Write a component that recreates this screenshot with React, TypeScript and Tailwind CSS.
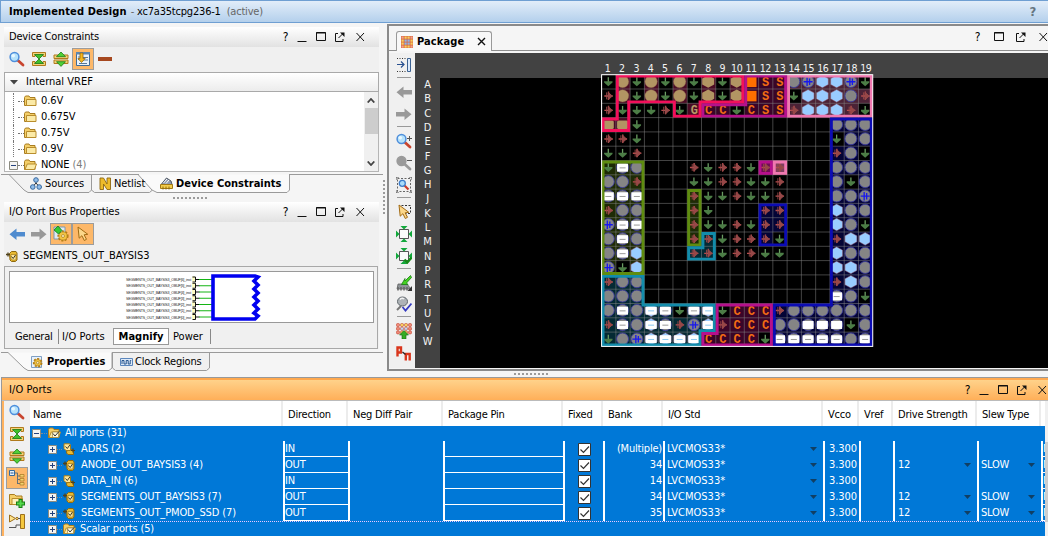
import React from "react";

type Kids = { children?: React.ReactNode };

/* ---------- icons ---------- */

const Svg = ({ children, w = 16, h = 16 }: Kids & { w?: number; h?: number }) => (
  <svg width={w} height={h} viewBox={`0 0 ${w} ${h}`} fill="none" className="block shrink-0">
    {children}
  </svg>
);

const Mag = ({ grey = false, sign }: { grey?: boolean; sign?: "+" | "-" }) => (
  <Svg>
    <path d="M8.5 9 L14 14" stroke={grey ? "#9a9a9a" : "#c8452f"} strokeWidth="2.8" strokeLinecap="round" />
    <circle cx="5.5" cy="6" r="4.4" fill={grey ? "#9a9a9a" : "#b5e2fb"} stroke={grey ? "#9a9a9a" : "#4e8edb"} strokeWidth="1.5" />
    {!grey && <circle cx="4.3" cy="4.8" r="1.8" fill="#e8f7ff" />}
    {sign && <path d={sign === "+" ? "M11 5.5h5M13.5 3v5" : "M11 5.5h5"} stroke="#555" />}
  </Svg>
);

const bars = "M1.5 1.5h13v4h-2.500v-1.500h-8v1.500h-2.500zM1.500 14.500h13v-4h-2.500v1.500h-8v-1.500h-2.500z";
const CollapseAll = () => (
  <Svg>
    <path d={bars} fill="#f3d27a" stroke="#b07a1c" />
    <path d="M3.500 3.500h9L8 8zM3.500 12.500h9L8 8z" fill="#3fbf2c" stroke="#1c7c15" strokeWidth=".8" />
  </Svg>
);
const ExpandAll = () => (
  <Svg>
    <path d="M1 7.500v-3.500h14v3.500zM1 9h14v3.500h-14z" fill="#f3d27a" stroke="#b07a1c" />
    <path d="M3.500 5.700L8 1l4.500 4.700zM3.500 10.700L8 15.400l4.500-4.700z" fill="#4fd038" stroke="#1c7c15" strokeWidth=".8" />
  </Svg>
);
const DocArrow = () => (
  <Svg>
    <path d="M1.500 1.500h13v13h-13z" fill="#e9f2fc" stroke="#3f6b98" />
    <path d="M1 1h14v2.500H1z" fill="#5c86b0" />
    <path d="M3 6h3M3 8.500h2M8 6.500h5M8 9h5M4 12.500h8" stroke="#587796" />
    <path d="M5 2h3v5.500h2.200L6.500 11.500 3 7.500h2z" fill="#f5b81e" stroke="#98680a" strokeWidth=".8" />
  </Svg>
);
const Folder = ({ open = false, check = false }: { open?: boolean; check?: boolean }) => (
  <Svg w={13} h={12}>
    <path d="M.5 10.500v-8l1-1.500h3.500l1 1.500h5v8z" fill="#f4cf69" stroke="#a97d21" />
    <path d={open ? "M1 10.500l2.300-5.500h9.200L10.500 10.500z" : "M2.500 10.500v-6h9.500v6z"} fill="#fbeaa7" stroke="#b98d2c" />
    {check && (
      <>
        <path d="M4.500 5h6v5.500h-6z" fill="#fff9dd" stroke="#8a7330" strokeWidth=".6" />
        <path d="M5 6.500l2 2.500L11 4.500" stroke="#333" />
      </>
    )}
  </Svg>
);
const Expander = ({ open = false }: { open?: boolean }) => (
  <Svg w={9} h={9}>
    <path d="M.5.5h8v8h-8z" fill="#f4f4f2" stroke="#8b8b80" />
    <path d={open ? "M2 4.500h5" : "M2 4.500h5M4.500 2v5"} stroke="#24427c" />
  </Svg>
);
const Arrow = ({ color, right = false }: { color: string; right?: boolean }) => (
  <Svg>
    <path d={right ? "M0 6v4.500h8.500v3.500L15.500 8.200 8.500 2.500v3.500z" : "M16 6v4.500H7.500v3.500L.5 8.200 7.500 2.500v3.500z"} fill={color} />
  </Svg>
);
const Gear = ({ cx = 8, cy = 8, r = 4 }: { cx?: number; cy?: number; r?: number }) => (
  <>
    <circle cx={cx} cy={cy} r={r} stroke="#b37d13" strokeWidth="2.400" strokeDasharray="1.900 1.300" />
    <circle cx={cx} cy={cy} r={r - 0.3} fill="#f2c544" stroke="#b98720" strokeWidth=".8" />
    <circle cx={cx} cy={cy} r={r / 3} fill="#fff5d0" stroke="#a87914" strokeWidth=".7" />
  </>
);
const GearDoc = () => (
  <Svg>
    <path d="M1 1h11v12h-11z" fill="#dfeaf5" stroke="#7f97b0" />
    <Gear cx={10} cy={10} r={4.4} />
    <path d="M1 4l4-4 4 4.500-3.500 3.500z" fill="#35c935" stroke="#16761a" strokeWidth=".8" />
  </Svg>
);
const Properties = () => (
  <Svg w={12} h={12}>
    <path d="M.5.5h10v11h-10z" fill="#e8f1fb" stroke="#7f9fc4" />
    <Gear cx={6.7} cy={6.7} r={3.6} />
  </Svg>
);
const cursorPath = "M3 1l1.200 11.200 2.700-2.500 2.400 4.800 2.200-1.200-2.400-4.500 3.700-.5z";
const Cursor = ({ marquee = false }: { marquee?: boolean }) => (
  <Svg>
    {marquee && <path d="M5.500 1.500h9v8h-5" stroke="#333" strokeDasharray="2 1.500" />}
    <path d={cursorPath} fill="#fbd78a" stroke="#a26a12" />
  </Svg>
);
const Port = ({ out = false }: { out?: boolean }) => (
  <Svg w={12} h={12}>
    {out ? (
      <>
        <path d="M3.500 3.500l2-2h4.500l1 1.500v7l-1.500 1.500h-4l-1.500-1.500z" fill="#e8b932" stroke="#8f6a10" />
        <path d="M5 4.500h5v5.500h-4l-1-1.500z" fill="#ffe79a" stroke="#a67b14" strokeWidth=".7" />
        <path d="M5.500 6.500l1.700 2L9.500 5" stroke="#3a3a30" />
        <path d="M0 4.500h4M2 2.500v4" stroke="#51431d" strokeWidth="1.300" />
      </>
    ) : (
      <>
        <path d="M4 6.500h5.500l1 1v4h-5.500l-1.500-1.500z" fill="#e8b932" stroke="#8f6a10" />
        <path d="M1 .8h5.500l1 1.200v5.500h-4.500l-2-2z" fill="#ffe79a" stroke="#a67b14" />
        <path d="M2.500 3.500l1.800 2L6.800 2" stroke="#3a3a30" />
        <path d="M8 7.500h4M10 5.500v4" stroke="#51431d" strokeWidth="1.200" />
      </>
    )}
  </Svg>
);
const Sources = () => (
  <Svg w={12} h={13}>
    <path d="M6 3v3L2.500 10M6 6l3.500 4" stroke="#333" />
    <circle cx="6" cy="3" r="2.300" fill="#91bde9" stroke="#35679e" />
    <circle cx="2.800" cy="10" r="2.300" fill="#91bde9" stroke="#35679e" />
    <circle cx="9.200" cy="10" r="2.300" fill="#91bde9" stroke="#35679e" />
  </Svg>
);
const Netlist = () => (
  <Svg w={12} h={13}>
    <path d="M1 12.500V1h3.500l3.500 6V1h3.500v11.500H8L4.500 7v5.500z" fill="#edbb2b" stroke="#8d6811" strokeWidth=".9" />
  </Svg>
);
const Constraint = () => (
  <Svg w={13} h={13}>
    <path d="M1.500 7l5-6 4.500 3 1 3.500H1.500z" fill="#8f9bb0" stroke="#4f5864" />
    <path d="M3.500 6l3.500-4M6 6.500l3-3.500" stroke="#fff" />
    <path d="M.5 7.500h12v4H.5z" fill="#f3cd4d" stroke="#a37915" />
    <path d="M3 9.500v3M6 9.500v3M9 9.500v3" stroke="#8b690f" />
  </Svg>
);
const Clock = () => (
  <Svg w={13} h={10}>
    <path d="M.5 1.500h12v7H.5z" fill="#dfebf9" stroke="#5b86bc" />
    <path d="M2 7V3.500h2V7h2.200V3.500h2V7h2V3.500h1" stroke="#27548d" />
  </Svg>
);
const PackageIcon = () => (
  <Svg w={12} h={12}>
    <path d="M0 0h12v12H0z" fill="#d9683f" />
    {[0, 1, 2, 3].map((r) =>
      [0, 1, 2, 3].map((c) => (
        <rect key={`${r}${c}`} x={0.5 + c * 3} y={0.5 + r * 3} width="2.200" height="2.200" fill={r === 1 || r === 2 ? (c === 1 || c === 2 ? "#8db5ea" : "#f7cf5e") : c === 1 || c === 2 ? "#f7cf5e" : "#f3a28c"} />
      )),
    )}
  </Svg>
);
const AutoHide = () => (
  <Svg>
    <path d="M1 1.500h9M1 14.500h9" stroke="#333" strokeDasharray="1 1.500" />
    <path d="M1 7.500h7M5 4.500l3 3-3 3" stroke="#285090" strokeWidth="1.200" />
    <path d="M11.500 1.500h3v13h-3z" fill="#dceafb" stroke="#3c6293" />
  </Svg>
);
const ZoomFit = () => (
  <Svg>
    <path d="M1.500 1.500h13v13h-13z" stroke="#666" strokeDasharray="2 1.500" />
    <path d="M0 3V0h3M13 0h3v3M16 13v3h-3M3 16H0v-3" stroke="#555" />
    <path d="M8 8l4.500 4.500" stroke="#cc3b2b" strokeWidth="2.200" />
    <circle cx="6.300" cy="6.300" r="3" fill="#aadcfb" stroke="#3d7dca" strokeWidth="1.300" />
  </Svg>
);
const FitSel = ({ check = false }: { check?: boolean }) => (
  <Svg>
    <path d="M3.500 3.500h9v9h-9z" fill="#fafafa" stroke="#555" />
    <path d="M4.500 0h7L8 3.500zM4.500 16h7L8 12.500zM0 4.500v7L3.500 8zM16 4.500v7L12.500 8z" fill="#12a83c" />
    {check && <path d="M8.500 11.500l2.700 3 4.300-5" stroke="#168a19" strokeWidth="2.500" />}
  </Svg>
);
const ChipArrow = () => (
  <Svg>
    <path d="M2 9h9l4 5H1z" fill="#8f9498" stroke="#555" strokeWidth=".7" />
    <path d="M2 12v3.500M5 12v3.500M8 12v3.500M11 12v3.500" stroke="#666" strokeWidth="1.500" />
    <path d="M16 11v5h-4.500z" fill="#333" />
    <path d="M14.500.5L9 6V3.500L5.500 9.500H12L10.500 8l5-5.500z" fill="#46d321" stroke="#167d12" strokeWidth=".8" />
  </Svg>
);
const PinCheck = () => (
  <Svg>
    <path d="M1 14l4-4" stroke="#777" strokeWidth="2" />
    <ellipse cx="6.500" cy="5.500" rx="5" ry="4.500" fill="#aeb3b7" stroke="#60666b" />
    <path d="M4 3.500c1-1.500 3-1.500 4-.5" stroke="#f2f2f2" strokeWidth="1.500" />
    <path d="M6.500 11l3 3.500L15.500 7.500" stroke="#353bc1" strokeWidth="1.800" />
  </Svg>
);
const GridUp = () => (
  <Svg>
    {[0, 1, 2].map((r) =>
      [0, 1, 2, 3].map((c) => (
        <rect key={`${r}${c}`} x={0.5 + c * 4} y={0.5 + r * 3.7} width="3" height="3" rx="1" fill={r === 1 && (c === 1 || c === 2) ? "#bcd5f4" : c === 1 || c === 2 ? "#f7cf5e" : "#f08a78"} stroke="#c2432f" strokeWidth=".6" />
      )),
    )}
    <path d="M8 7.500l4.500 4.500H10v4H6v-4H3.500z" fill="#34ab25" stroke="#166b12" strokeWidth=".6" />
  </Svg>
);
const DiffPair = () => (
  <Svg>
    <path d="M1.500 11.500V2.500h3.500v5h-3M9.800 15.500V9h3.900v6.500" stroke="#d9351b" strokeWidth="2.400" />
    <path d="M6.500 7l3 2.500" stroke="#222" strokeWidth="1.300" />
  </Svg>
);
const TreeIcon = () => (
  <Svg>
    <path d="M.5.5h5v5h-5z" fill="#e6f1fb" stroke="#356a9e" />
    <path d="M1.500 3h3" stroke="#24518a" />
    <path d="M6 3h2.500v11M8.500 6H11M8.500 9.500H11M8.500 13.500H11" stroke="#65727b" />
    <path d="M11 4.500h4v2.500h-4zM11 8.500h4V11h-4zM11 12.500h4V15h-4z" fill="#f5d170" stroke="#a37523" strokeWidth=".7" />
  </Svg>
);
const AddFolder = () => (
  <Svg>
    <path d="M.5 11.500V1.500h5L7 3h6v8.500z" fill="#f4cf69" stroke="#a97d21" />
    <path d="M3 11.500v-6h10.500v6z" fill="#fff1bd" stroke="#b98d2c" />
    <path d="M11.500 6v9M7 10.500h9" stroke="#187d17" strokeWidth="4" />
    <path d="M11.500 7v7M8 10.500h7" stroke="#54d84b" strokeWidth="2" />
  </Svg>
);
const BufferIcon = () => (
  <Svg>
    <path d="M.5 1v7l6-3.500z" fill="#ffe38b" stroke="#9c701d" />
    <circle cx="8" cy="4.500" r="1.200" fill="#ffe38b" stroke="#9c701d" />
    <path d="M9 4.500h3M0 13.500h7V11h4" stroke="#555" />
    <path d="M11.500 .5h4v14h-4z" fill="#f4c73e" stroke="#9c701d" />
  </Svg>
);

/* ---------- window controls ---------- */

const Controls = ({ wide = false }: { wide?: boolean }) => (
  <div className="flex items-center">
    <span className="w-[9px] text-center text-[12px] leading-none">?</span>
    {!wide && <div className="ml-[7px]"><Svg w={10} h={10}><path d="M.5 9.500h9" stroke="#111" /></Svg></div>}
    <div className={wide ? "ml-[11px]" : "ml-[8px]"}>
      <Svg w={12} h={10}><path d="M1.500 .5h9v8h-9z" stroke="#111" /><path d="M1 1h10" stroke="#111" /></Svg>
    </div>
    <div className={wide ? "ml-[11px]" : "ml-[8px]"}>
      <Svg w={10} h={10}>
        <path d="M3 1.500H.5v8h7.500V7M3.500 6L8 1.500" stroke="#111" />
        <path d="M5 .5h4.500V5z" fill="#111" />
      </Svg>
    </div>
    <div className={wide ? "ml-[12px]" : "ml-[10px]"}>
      <Svg w={11} h={10}><path d="M1.500 1l7.500 8M9 1L1.500 9" stroke="#111" /></Svg>
    </div>
  </div>
);

const Dots = ({ vertical = false }: { vertical?: boolean }) => (
  <div className={vertical ? "flex flex-col gap-[2px]" : "flex gap-[2px]"}>
    {Array.from({ length: 9 }, (_, i) => (
      <i key={i} className="block size-[2px] bg-[#9b9b9b]" />
    ))}
  </div>
);

const Hot = ({ children }: Kids) => (
  <div className="flex size-[22px] items-center justify-center border border-[#9c9c9c] bg-[#fdb869]">{children}</div>
);

const PanelTitle = ({ children }: Kids) => (
  <div className="flex h-[20px] w-[375px] items-center justify-between bg-linear-to-b from-white to-[#e2e2e2] pr-[13px] pl-[5px]">
    <span>{children}</span>
    <Controls />
  </div>
);

/* ---------- package drawing ---------- */

const PX = 14.27;
const PY = 14.3;
const cells = [
  "gtgtgtghghOSScbxxbg",
  "vtgtgtghghOSSgxxxcv",
  "vgggvgGCCgCSSvxxxvg",
  "rrg.............ccc",
  "vvg.............gcc",
  "ggv.............vcg",
  "gwc...vgvvgvv...ccc",
  "ccv...ggvvggv...cgc",
  "www...vggvggv...ccb",
  "vcc...vg...vv...xcc",
  "bww...vggvgvv...xcg",
  "cwc...vvgvvvg...vxx",
  "cwx...vvgvvgg...xcc",
  "bgx.............xxc",
  "vcc.............vxc",
  "ccc.............wcg",
  "cwcWwgwWgCCCvcccccc",
  "vwcWwvbWvCCCccpppgc",
  "gcbWWWWCCCCgwwwwwcw",
];

type Region = { c: string; f: string; p: number[][] };
const box = (a: number, b: number, c: number, d: number) => [[a, b], [c, b], [c, d], [a, d]];
const regions: Region[] = [
  { c: "#b6108c", f: "#3a0528", p: [[10, 0], [13, 0], [13, 3], [7, 3], [7, 2], [10, 2]] },
  { c: "#f30f5b", f: "#4b0b24", p: [[1, 0], [10, 0], [10, 2], [7, 2], [7, 3], [5, 3], [5, 2], [2, 2], [2, 4], [0, 4], [0, 3], [1, 3]] },
  { c: "#f078b0", f: "#4b2236", p: box(13, 0, 19, 3) },
  { c: "#0c0cb4", f: "#040436", p: [[16, 3], [19, 3], [19, 19], [12, 19], [12, 16], [16, 16]] },
  { c: "#5f8c10", f: "#1e2b06", p: box(0, 6, 3, 14) },
  { c: "#5f8c10", f: "#1e2b06", p: box(6, 8, 7, 12) },
  { c: "#128cab", f: "#042a34", p: [[7, 11], [8, 11], [8, 13], [6, 13], [6, 12], [7, 12]] },
  { c: "#128cab", f: "#042a34", p: [[0, 14], [3, 14], [3, 16], [8, 16], [8, 18], [7, 18], [7, 19], [0, 19]] },
  { c: "#b6108c", f: "#3a0528", p: [[8, 16], [12, 16], [12, 19], [7, 19], [7, 18], [8, 18]] },
  { c: "#b6108c", f: "#6e0d54", p: box(11, 6, 12, 7) },
  { c: "#f078b0", f: "#803f5e", p: box(12, 6, 13, 7) },
  { c: "#0c0cb4", f: "#040436", p: box(11, 9, 13, 12) },
];
const pts = (p: number[][]) => p.map(([x, y]) => `${x * PX},${y * PY}`).join(" ");
const hex = "-6,-3 0,-6.300 6,-3 6,3 0,6.300 -6,3";

const Pin = ({ k, x, y }: { k: string; x: number; y: number }) => {
  const ring = <circle r="6" fill="#858585" stroke="#3b3b9b" strokeWidth=".9" />;
  const bluehex = <polygon points={hex} fill="#99ccff" stroke="#8c4f60" strokeWidth=".5" />;
  const white = (
    <>
      <rect x="-5.500" y="-3.700" width="11" height="8" fill="#fff" />
      {k !== "p" && <path d="M-3 .5h6" stroke={k === "W" ? "#8cc8f0" : "#999"} />}
    </>
  );
  let body: React.ReactNode = null;
  if (k === "g")
    body = (
      <>
        <path d="M0-4.200V3" stroke="#6a9c62" strokeWidth="1.300" />
        <path d="M-4.200 -.3h8.400v1.300L0 4.700l-4.200-3.700z" fill="#4c7d46" />
      </>
    );
  else if (k === "v")
    body = (
      <>
        <path d="M-4 .2H4.500M.2-4.300v8.500" stroke="#b84e4e" strokeWidth="1.400" />
        <path d="M-1.700-3.500v7M0-3.500L4 .2 0 3.800z" fill="#974848" stroke="#974848" strokeWidth=".9" />
      </>
    );
  else if (k === "t") body = <circle r="6.200" fill="#b29563" stroke="#865f4a" strokeWidth=".4" />;
  else if (k === "h") body = <polygon points={hex} fill="#b29563" />;
  else if (k === "r") body = <rect x="-5.500" y="-4" width="11" height="8.500" rx="1.500" fill="#b29563" />;
  else if (k === "O") body = <rect x="-5" y="-5" width="10.500" height="10.500" fill="#ff6e00" />;
  else if (k === "c") body = ring;
  else if (k === "x") body = bluehex;
  else if (k === "b")
    body = (
      <>
        {ring}
        <path d="M-4.500 .2h9M-1-4v8.500M1.500-3v6.500" stroke="#1717ef" strokeWidth="1.300" />
      </>
    );
  else if (k === "w" || k === "p") body = <>{ring}{white}</>;
  else if (k === "W") body = <>{bluehex}{white}</>;
  else if (k === "S" || k === "C" || k === "G")
    body = (
      <text x=".3" y="4.300" textAnchor="middle" fontSize="12" fontWeight="bold" fontFamily="Liberation Mono, monospace" fill={k === "G" ? "#b99a66" : "#f26c14"}>
        {k}
      </text>
    );
  return <g transform={`translate(${x} ${y})`}>{body}</g>;
};

const letters = "ABCDEFGHJKLMNPRTUVW".split("");

const PackageView = () => (
  <svg width="633" height="315" viewBox="415 53 633 315" className="block shrink-0" fontFamily="DejaVu Sans Condensed, sans-serif">
    <rect x="415" y="53" width="633" height="315" fill="#424242" />
    <rect x="440" y="78" width="608" height="290" fill="#000" />
    {letters.map((l, i) => (
      <text key={l} x="427.500" y={88 + i * PY} fontSize="11" textAnchor="middle" fill="#f4f4f4">{l}</text>
    ))}
    {letters.map((l, i) => (
      <text key={l} x={607.5 + i * 14.35} y="72.300" fontSize="10.500" letterSpacing="-.4" textAnchor="middle" fill="#f4f4f4">{i + 1}</text>
    ))}
    <g transform="translate(601.600 74.700)">
      <rect width={19 * PX} height={19 * PY} fill="#000" />
      {regions.map((r, i) => (
        <polygon key={i} points={pts(r.p)} fill={r.f} />
      ))}
      {cells.flatMap((row, y) =>
        row.split("").map((k, x) =>
          k === "g" && !(y === 6 && x === 0) && !(y === 18 && x === 0) ? (
            <rect key={`${y}-${x}`} x={x * PX} y={y * PY} width={PX} height={PY} fill="#000" />
          ) : null,
        ),
      )}
      <g stroke="#858585" strokeOpacity=".5" strokeWidth="1">
        {letters.map((_, i) => (
          <path key={i} d={`M${i * PX} 0V${19 * PY}M0 ${i * PY}H${19 * PX}`} />
        ))}
      </g>
      {cells.flatMap((row, y) =>
        row.split("").map((k, x) => <Pin key={`${y}-${x}`} k={k} x={(x + 0.47) * PX} y={(y + 0.48) * PY} />),
      )}
      {regions.map((r, i) => (
        <g key={i}>
          <clipPath id={`bank${i}`}><polygon points={pts(r.p)} /></clipPath>
          <polygon points={pts(r.p)} clipPath={`url(#bank${i})`} stroke={r.c} strokeWidth="5.800" fill="none" />
        </g>
      ))}
      <rect width={19 * PX} height={19 * PY} fill="none" stroke="#fff" />
    </g>
  </svg>
);

/* ---------- left column ---------- */

const TreeRow = ({ label, note }: { label: string; note?: string }) => (
  <div className="flex h-[16px] items-center">
    {note ? <div className="ml-[4px]"><Expander open /></div> : <div className="ml-[8px] h-full w-[5px] border-l border-dotted border-[#777]" />}
    <div className="w-[6px] border-t border-dotted border-[#777]" />
    <Folder open={!!note} />
    <span className="ml-[4px] tracking-[-0.1px]">{label}{note && <span className="text-[#7c7c7c]"> {note}</span>}</span>
  </div>
);

const DeviceConstraints = () => (
  <section className="ml-[4px] w-[375px]">
    <PanelTitle>Device Constraints</PanelTitle>
    <div className="flex h-[25px] items-center bg-[#f0f0f0] pb-[1px] pl-[5px]">
      <Mag />
      <div className="ml-[6px]"><CollapseAll /></div>
      <div className="mr-[3px] ml-[6px]"><ExpandAll /></div>
      <Hot><DocArrow /></Hot>
      <div className="ml-[4px] h-[4px] w-[14px] bg-[#a6481f]" />
    </div>
    <div className="flex h-[20px] items-center border border-[#a9a9a9] bg-linear-to-b from-white to-[#ececec] pl-[5px]">
      <Svg w={8} h={5}><path d="M0 0h8L4 4.500z" fill="#444" /></Svg>
      <span className="ml-[8px] tracking-[0px]">Internal VREF</span>
    </div>
    <div className="flex h-[80px] border border-t-0 border-[#b5b5b5] bg-white">
      <div className="flex-1 overflow-hidden pt-[1px]">
        <TreeRow label="0.6V" />
        <TreeRow label="0.675V" />
        <TreeRow label="0.75V" />
        <TreeRow label="0.9V" />
        <TreeRow label="NONE" note="(4)" />
      </div>
      <div className="flex w-[14px] flex-col items-center bg-[#f0f0f0] pt-[6px]">
        <Svg w={8} h={5}><path d="M.7 4.500L4 1l3.300 3.500" stroke="#444" strokeWidth="1.800" /></Svg>
        <div className="mt-[5px] h-[26px] w-[13px] bg-[#cdcdcd]" />
        <div className="mt-[27px]"><Svg w={8} h={5}><path d="M.7.5L4 4 7.300.5" stroke="#444" strokeWidth="1.800" /></Svg></div>
      </div>
    </div>
  </section>
);

const SourceTabs = () => (
  <div className="relative mt-[2px] h-[19px]">
    <svg className="absolute top-0 left-0" width="384" height="19" fill="none" stroke="#9a9a9a">
      <path d="M9 .5L24 16l4 2.500h61l2.500-2.500V.500M91.500 16l3 2.500h55l3-2.500" fill="#f2f2f2" />
      <path d="M138 .5L152 16l5 2.500h130l2.500-2.500V.500" fill="#fafafa" stroke="#9a9a9a" />
      <path d="M1 .5h138M289 .5h94" />
    </svg>
    <div className="relative flex h-[19px] items-center pl-[30px]">
      <Sources /><span className="ml-[3px] w-[54px] tracking-[0px]">Sources</span>
      <Netlist /><span className="ml-[3px] w-[46px] tracking-[-0.1px]">Netlist</span>
      <Constraint /><b className="ml-[3px] tracking-[0.020px]">Device Constraints</b>
    </div>
  </div>
);

const Schematic = () => (
  <svg width="363" height="50" viewBox="10 272 363 50" className="block" fontFamily="Liberation Sans, sans-serif">
    {[6, 5, 4, 3, 2, 1, 0].map((n, i) => {
      const y = 279.5 + i * 6.25;
      return (
        <g key={n}>
          <text x="126" y={y + 1.7} fontSize="4.400" textLength="65" lengthAdjust="spacingAndGlyphs" fill="#222">{`SEGMENTS_OUT_BAYSIS3_OBUF[${n}]_inst`}</text>
          <path d={`M192 ${y - 3}h3v5h-3z`} fill="#fdfbc3" />
          <path d={`M192.500 ${y - 2.5}h3v5h-3M195.500 ${y}h4`} stroke="#111" fill="none" />
          <path d={`M199 ${y}h13`} stroke="#14b414" />
        </g>
      );
    })}
    <path d="M255 276h-42v43h42l3-3-4-3 4-4-4-4 4-4-4-4 4-4-4-4 4-4-4-4 4-4z" fill="#fff" stroke="#0000f0" strokeWidth="3.600" />
  </svg>
);

const BusProperties = () => (
  <section className="ml-[4px] w-[375px]">
    <PanelTitle><span className="tracking-[-0.030px]">I/O Port Bus Properties</span></PanelTitle>
    <div className="bg-[#f0f0f0]">
      <div className="flex h-[24px] items-center pb-[1px] pl-[5px]">
        <Arrow color="#4f8bcf" />
        <div className="mr-[3px] ml-[6px]"><Arrow color="#999" right /></div>
        <Hot><GearDoc /></Hot>
        <Hot><Cursor /></Hot>
      </div>
      <div className="flex h-[20px] items-center pl-[2px]"><Port out /><span className="ml-[5px] tracking-[0.020px]">SEGMENTS_OUT_BAYSIS3</span></div>
      <div className="h-[83px] w-[374px] border border-[#a8a8a8] p-[4px]">
        <div className="h-[52px] w-[365px] border border-[#999] bg-white"><Schematic /></div>
        <div className="mt-[5px] flex h-[17px] items-center pl-[6px] tracking-[-0.1px]">
          <span className="w-[43px] tracking-[-0.2px]">General</span>
          <span className="flex h-[15px] w-[55px] items-center border-l border-[#888] pl-[3px] tracking-[0.1px]">I/O Ports</span>
          <b className="flex h-[17px] w-[56px] items-center justify-center border border-[#999] bg-white tracking-[0px]">Magnify</b>
          <span className="flex h-[15px] w-[42px] items-center border-r border-[#888] pl-[4px] tracking-[0px]">Power</span>
        </div>
      </div>
    </div>
  </section>
);

const PropertyTabs = () => (
  <div className="relative mt-[3px] h-[19px]">
    <svg className="absolute top-0 left-0" width="384" height="19" fill="none" stroke="#9a9a9a">
      <path d="M8 .5L24 16l4 2.500h81l3-2.500V.5" fill="#fafafa" />
      <path d="M112.500 .5V16l3 2.500h91l3-2.500V.5" fill="#f0f0f0" />
      <path d="M1 .5h7M112 .5h271" />
    </svg>
    <div className="relative flex h-[19px] items-center pl-[31px]">
      <Properties /><b className="ml-[4px] w-[73px] tracking-[0px]">Properties</b>
      <Clock /><span className="ml-[2px]">Clock Regions</span>
    </div>
  </div>
);

/* ---------- package panel ---------- */

const Sep = () => <div className="h-px w-[14px] bg-[#999]" />;

const PackagePanel = () => (
  <section className="flex h-[347px] w-[661px] flex-col border-2 border-r-0 border-[#8a8a8a] bg-[#f5f5f5]">
    <div className="flex h-[25px] items-end justify-between border-b border-[#8e8e8e] pl-[7px]">
      <div className="mb-[-1px] flex h-[20px] w-[96px] items-center rounded-t-[3px] border border-b-0 border-[#999] bg-[#f8f8f8] pl-[4px]">
        <PackageIcon />
        <b className="ml-[4px] w-[60px] tracking-[0.1px]">Package</b>
        <Svg w={9} h={9}><path d="M1 1l7 7M8 1L1 8" stroke="#111" strokeWidth="1.400" /></Svg>
      </div>
      <div className="-mr-[1px] mb-[7px]"><Controls wide /></div>
    </div>
    <div className="flex pt-[2px]">
      <div className="flex h-[315px] w-[26px] flex-col items-center bg-[#f0f0f0] pt-[4px] pl-[3px]">
        <AutoHide />
        <div className="mt-[4px] mb-[6px]"><Sep /></div>
        <Arrow color="#999" />
        <div className="mt-[6px]"><Arrow color="#999" right /></div>
        <div className="mt-[4px] mb-[6px]"><Sep /></div>
        <Mag sign="+" />
        <div className="mt-[6px]"><Mag grey sign="-" /></div>
        <div className="mt-[6px] mb-[4px]"><ZoomFit /></div>
        <Sep />
        <div className="mt-[6px]"><Cursor marquee /></div>
        <div className="mt-[6px]"><FitSel /></div>
        <div className="mt-[6px] mb-[4px]"><FitSel check /></div>
        <Sep />
        <div className="mt-[6px]"><ChipArrow /></div>
        <div className="mt-[5px] mb-[4px]"><PinCheck /></div>
        <Sep />
        <div className="mt-[6px]"><GridUp /></div>
        <div className="mt-[6px]"><DiffPair /></div>
      </div>
      <PackageView />
    </div>
  </section>
);

/* ---------- I/O ports ---------- */

const cols = "grid grid-cols-[253px_65px_95px_120px_40px_60px_160px_36px_34px_84px_64px_4px]";
const heads = ["Name", "Direction", "Neg Diff Pair", "Package Pin", "Fixed", "Bank", "I/O Std", "Vcco", "Vref", "Drive Strength", "Slew Type", ""];
const rows = [
  { n: "ADRS (2)", d: "IN", b: "(Multiple)" },
  { n: "ANODE_OUT_BAYSIS3 (4)", d: "OUT", b: "34" },
  { n: "DATA_IN (6)", d: "IN", b: "14" },
  { n: "SEGMENTS_OUT_BAYSIS3 (7)", d: "OUT", b: "34" },
  { n: "SEGMENTS_OUT_PMOD_SSD (7)", d: "OUT", b: "35" },
];

const Drop = () => <Svg w={7} h={4}><path d="M0 0h7L3.500 4z" fill="#113f63" /></Svg>;
const Cell = ({ children }: Kids) => (
  <div className="flex items-center justify-between overflow-hidden border-l-2 border-white pr-[6px] pl-[2px] whitespace-nowrap">{children}</div>
);
const Check = () => (
  <Svg w={13} h={13}>
    <path d="M.5.5h12v12H.5z" fill="#fff" stroke="#333" />
    <path d="M2.500 6.500l3 3L11 3.500" stroke="#333" strokeWidth="1.200" />
  </Svg>
);

const Table = () => (
  <div className="flex-1 overflow-hidden bg-[#0078d7] text-white">
    <div className={`${cols} h-[25px] bg-white text-black`}>
      {heads.map((h, i) => (
        <span key={i} className={i === 0 ? "flex items-center border-r-2 border-[#ececec] pt-[2px] pl-[3px] whitespace-nowrap" : "flex items-center border-r-2 border-[#ececec] pt-[2px] pl-[5px] whitespace-nowrap"}>{h}</span>
      ))}
    </div>
    <div className="flex h-[15px] items-center pb-[1px] pl-[2px]">
      <Expander open /><i className="mr-[1px] w-[6px] border-t border-dotted border-[#7c8a98]" /><Folder open check /><span className="ml-[4px]">All ports (31)</span>
    </div>
    {rows.map((r) => (
      <div key={r.n} className={`${cols} h-[16px]`}>
        <div className="flex items-center pl-[18px]">
          <Expander /><i className="mr-[1px] w-[5px] border-t border-dotted border-[#7c8a98]" /><Port out={r.d === "OUT"} /><span className="ml-[6px] tracking-[-0.120px]">{r.n}</span>
        </div>
        <div className="flex items-center border-b border-l-2 border-white leading-none"><span className="-mt-[1px]">{r.d}</span></div>
        <div className="border-l-2 border-white" />
        <div className="border-b border-l-2 border-white" />
        <div className="flex items-center justify-center border-l-2 border-white"><Check /></div>
        <div className="flex items-center justify-end border-l-2 border-white pr-[1px]">{r.b}</div>
        <Cell><span className="tracking-[0px]">LVCMOS33*</span><Drop /></Cell>
        <div className="flex items-center border-l-2 border-white pl-[4px] tracking-[-0.1px]">3.300</div>
        <div className="border-l-2 border-white" />
        <Cell>{r.d === "OUT" && <><span className="pl-[1px]">12</span><Drop /></>}</Cell>
        <Cell>{r.d === "OUT" && <><span>SLOW</span><Drop /></>}</Cell>
        <div className="overflow-hidden border-b border-l-2 border-white leading-[15px]">N</div>
      </div>
    ))}
    <div className="flex h-[16px] items-center border-y border-dotted border-[#e9c8ff] pl-[18px]">
      <Expander /><i className="mr-[1px] w-[5px] border-t border-dotted border-[#7c8a98]" /><Folder open check /><span className="ml-[4px] tracking-[-0.150px]">Scalar ports (5)</span>
    </div>
  </div>
);

const IoPorts = () => (
  <section className="ml-[1px] flex h-[159px] flex-col border-t border-l border-[#999] bg-[#f0f0f0]">
    <div className="flex h-[23px] items-center justify-between border-t-2 border-b border-t-[#ffa94f] border-b-[#bbb] bg-linear-to-b from-[#ffd28a] to-[#ffaf58] pr-0 pl-[7px]">
      <span className="tracking-[0.1px]">I/O Ports</span>
      <Controls />
    </div>
    <div className="flex flex-1 overflow-hidden border-l-2 border-[#ffb25f]">
      <div className="flex w-[26px] flex-col items-center pt-[3px]">
        <Mag />
        <div className="mt-[6px]"><CollapseAll /></div>
        <div className="mt-[6px] mb-[3px]"><ExpandAll /></div>
        <Hot><TreeIcon /></Hot>
        <div className="mt-[4px]"><AddFolder /></div>
        <div className="mt-[5px]"><BufferIcon /></div>
      </div>
      <Table />
      <div className="w-[3px] bg-[#f0f0f0] pt-[41px]"><div className="h-[80px] bg-[#cdcdcd]" /></div>
    </div>
  </section>
);

export default function App() {
  return (
    <main className="h-[536px] w-[1048px] overflow-hidden bg-[#f5f5f5] font-['DejaVu_Sans_Condensed','DejaVu_Sans',sans-serif] text-[11px] leading-[14px] tracking-[-0.2px] text-black">
      <header className="flex h-[23px] items-center justify-between border-y border-l border-[#6f9fd2] bg-linear-to-b from-[#e2edf9] to-[#b4d0ec] pr-[12px] pl-[8px]">
        <div><b className="tracking-[0.120px]">Implemented Design</b><span className="ml-[1px] text-[#666]"> - </span>xc7a35tcpg236-1 <span className="ml-[3px] text-[#666]">(active)</span></div>
        <b className="text-[13px] text-[#667681]">?</b>
      </header>
      <div className="flex h-[354px]">
        <div className="w-[383px] pt-[4px]">
          <DeviceConstraints />
          <SourceTabs />
          <div className="flex h-[9px] items-center pl-[173px]"><Dots /></div>
          <BusProperties />
          <PropertyTabs />
        </div>
        <div className="flex w-[4px] flex-col pt-[157px]"><Dots vertical /></div>
        <div className="pt-[1px]">
          <PackagePanel />
          <div className="flex h-[6px] items-center pl-[127px]"><Dots /></div>
        </div>
      </div>
      <IoPorts />
    </main>
  );
}
